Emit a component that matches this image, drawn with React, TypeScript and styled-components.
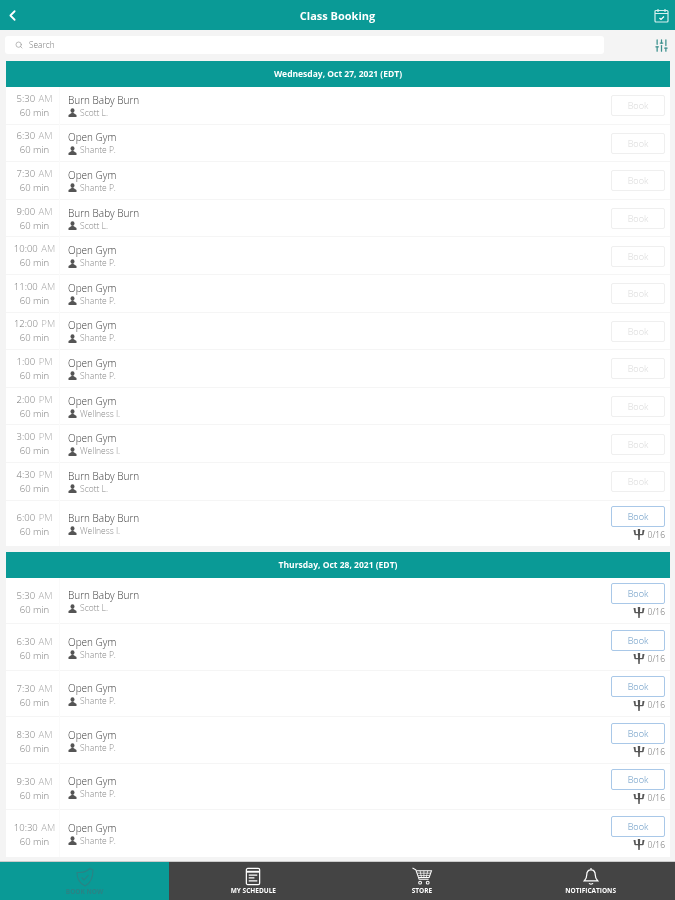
import React from 'react';
import styled, { createGlobalStyle } from 'styled-components';
import { ChevronLeft, Search as SearchIcon, SlidersVertical } from 'lucide-react';

const teal = '#0a9a96';

type ClassItem = {
  time: string;
  ampm: string;
  name: string;
  coach: string;
  open?: boolean;
};

const wednesday: ClassItem[] = [
  { time: '5:30', ampm: 'AM', name: 'Burn Baby Burn', coach: 'Scott L.' },
  { time: '6:30', ampm: 'AM', name: 'Open Gym', coach: 'Shante P.' },
  { time: '7:30', ampm: 'AM', name: 'Open Gym', coach: 'Shante P.' },
  { time: '9:00', ampm: 'AM', name: 'Burn Baby Burn', coach: 'Scott L.' },
  { time: '10:00', ampm: 'AM', name: 'Open Gym', coach: 'Shante P.' },
  { time: '11:00', ampm: 'AM', name: 'Open Gym', coach: 'Shante P.' },
  { time: '12:00', ampm: 'PM', name: 'Open Gym', coach: 'Shante P.' },
  { time: '1:00', ampm: 'PM', name: 'Open Gym', coach: 'Shante P.' },
  { time: '2:00', ampm: 'PM', name: 'Open Gym', coach: 'Wellness I.' },
  { time: '3:00', ampm: 'PM', name: 'Open Gym', coach: 'Wellness I.' },
  { time: '4:30', ampm: 'PM', name: 'Burn Baby Burn', coach: 'Scott L.' },
  { time: '6:00', ampm: 'PM', name: 'Burn Baby Burn', coach: 'Wellness I.', open: true },
];

const thursday: ClassItem[] = [
  { time: '5:30', ampm: 'AM', name: 'Burn Baby Burn', coach: 'Scott L.', open: true },
  { time: '6:30', ampm: 'AM', name: 'Open Gym', coach: 'Shante P.', open: true },
  { time: '7:30', ampm: 'AM', name: 'Open Gym', coach: 'Shante P.', open: true },
  { time: '8:30', ampm: 'AM', name: 'Open Gym', coach: 'Shante P.', open: true },
  { time: '9:30', ampm: 'AM', name: 'Open Gym', coach: 'Shante P.', open: true },
  { time: '10:30', ampm: 'AM', name: 'Open Gym', coach: 'Shante P.', open: true },
];

export default function App() {
  return (
    <>
      <GlobalStyle />
      <Page>
        <Header>
          <ChevronLeft size={17} color="#fff" strokeWidth={2.5} />
          <Title>Class Booking</Title>
          <CalendarCheck />
        </Header>
        <SearchRow>
          <SearchBox>
            <SearchIcon size={8} color="#999" />
            <span>Search</span>
          </SearchBox>
          <SlidersVertical size={15} color="#3a908d" />
        </SearchRow>
        <Content>
          <Day title="Wednesday, Oct 27, 2021 (EDT)" items={wednesday} />
          <Day title="Thursday, Oct 28, 2021 (EDT)" items={thursday} />
        </Content>
        <BottomNav>
          <NavItem $active>
            <ShieldCheck />
            <NavLabel $active>BOOK NOW</NavLabel>
          </NavItem>
          <NavItem>
            <ScheduleIcon />
            <NavLabel>MY SCHEDULE</NavLabel>
          </NavItem>
          <NavItem>
            <CartIcon />
            <NavLabel>STORE</NavLabel>
          </NavItem>
          <NavItem>
            <BellIcon />
            <NavLabel>NOTIFICATIONS</NavLabel>
          </NavItem>
        </BottomNav>
      </Page>
    </>
  );
}

function Day({ title, items }: { title: string; items: ClassItem[] }) {
  return (
    <Section>
      <DayHeader>{title}</DayHeader>
      {items.map((item, i) => (
        <Row key={i} $open={item.open} $loose={items === thursday}>
          <TimeCol $open={item.open}>
            <div>
              {item.time} <Ampm>{item.ampm}</Ampm>
            </div>
            <div>60 min</div>
          </TimeCol>
          <InfoCol $open={item.open}>
            <ClassName>{item.name}</ClassName>
            <Coach>
              <CoachIcon />
              {item.coach}
            </Coach>
          </InfoCol>
          <BookCol>
            <BookButton $open={item.open}>Book</BookButton>
            {item.open && (
              <Spots>
                <SpotsIcon />
                0/16
              </Spots>
            )}
          </BookCol>
        </Row>
      ))}
    </Section>
  );
}

function CoachIcon() {
  return (
    <svg width="9" height="9" viewBox="0 0 9 9" fill="#555">
      <ellipse cx="4.500" cy="2.600" rx="2" ry="2.400" />
      <path d="M3.500 5 L5.500 5 L8.500 7 V9 H0.500 V7Z" />
    </svg>
  );
}

function CalendarCheck() {
  return (
    <svg width="15" height="15" viewBox="0 0 15 15" fill="none" stroke="#d8f0ef" strokeWidth="1.2">
      <rect x="1" y="2.500" width="13" height="11.500" rx="1" />
      <path d="M4 1v3M11 1v3M1 5.500h13" />
      <path d="M5.500 10l1.500 1.500 3-3" stroke="#fff" />
    </svg>
  );
}

function ShieldCheck() {
  return (
    <svg width="20" height="20" viewBox="0 0 20 20" fill="none" stroke="#2b8385" strokeWidth="1.1">
      <path d="M2 5.500 Q10 6 15 1.500 L18 3 Q18 15 10 19 Q2 15 2 5.500Z" />
      <path d="M6.500 10.500l2.500 2.500 4.500-5" />
    </svg>
  );
}

function ScheduleIcon() {
  return (
    <svg width="16" height="19" viewBox="0 0 16 20" fill="none" stroke="#fff" strokeWidth="1.3">
      <rect x="1" y="1.500" width="14" height="17" rx="1.500" />
      <path d="M1 5h14" strokeWidth="2" />
      <path d="M3.500 8.500h9M3.500 11.500h6M3.500 14.500h9" />
    </svg>
  );
}

function CartIcon() {
  return (
    <svg width="22" height="19" viewBox="0 0 22 20" fill="none" stroke="#fff" strokeWidth="1.1">
      <path d="M1 1l3.500 2 3.500 10h10" />
      <path d="M5 4h16l-2.500 7H7.500" />
      <path d="M6 6.500h14M7 9h12M9 4l1.500 7M13 4v7M17 4l-1.500 7" strokeWidth="0.8" />
      <circle cx="9" cy="16.500" r="1.500" />
      <circle cx="17" cy="16.500" r="1.500" />
    </svg>
  );
}

function BellIcon() {
  return (
    <svg width="18" height="19" viewBox="0 0 18 20" fill="none" stroke="#fff" strokeWidth="1.3">
      <path d="M9 1v2M9 3c-3 0-4.500 2.500-4.500 5.500 0 3-1 4.500-2.500 6h14c-1.500-1.500-2.500-3-2.500-6C13.500 5.500 12 3 9 3Z" />
      <path d="M7 17c.5 1.300 3.500 1.300 4 0" />
    </svg>
  );
}

function SpotsIcon() {
  return (
    <svg width="12" height="11" viewBox="0 0 12 11" fill="#555">
      <path d="M0.500 1 H2.500 L3 6 H1.500Z" />
      <path d="M4.800 0 H7.200 L6.700 11 H5.300Z" />
      <path d="M9.500 1 H11.500 L10.500 6 H9Z" />
      <rect x="2" y="5" width="8" height="1.200" />
    </svg>
  );
}

const GlobalStyle = createGlobalStyle`
  html, body {
    margin: 0;
    padding: 0;
    background: #f4f4f4;
  }
  * {
    box-sizing: border-box;
  }
`;

const Page = styled.div`
  width: 675px;
  height: 900px;
  overflow: hidden;
  display: flex;
  flex-direction: column;
  background: #f4f4f4;
  font-family: 'Open Sans', sans-serif;
  filter: blur(0.45px);
`;

const Header = styled.header`
  height: 30px;
  flex: none;
  display: flex;
  align-items: center;
  justify-content: space-between;
  padding: 0 6px 0 4px;
  background: ${teal};
`;

const Title = styled.h1`
  margin: 0;
  font-size: 11px;
  font-weight: 700;
  color: #fff;
`;

const SearchRow = styled.div`
  flex: none;
  display: flex;
  align-items: center;
  justify-content: space-between;
  height: 30px;
  margin-bottom: 1px;
  padding: 0 6px 0 5px;
`;

const SearchBox = styled.div`
  width: 599px;
  height: 18px;
  display: flex;
  align-items: center;
  gap: 6px;
  padding: 0 0 1px 10px;
  background: #fff;
  border-radius: 3px;
  font-size: 8.300px;
  font-weight: 300;
  color: #777;
`;

const Content = styled.main`
  flex: 1;
  min-height: 0;
  overflow: hidden;
  display: flex;
  flex-direction: column;
  gap: 6px;
  margin: 0 5px 0 6px;
`;

const Section = styled.section`
  flex: none;
  background: #fff;
`;

const DayHeader = styled.div`
  height: 26px;
  display: flex;
  align-items: center;
  justify-content: center;
  padding-bottom: 1px;
  background: ${teal};
  color: #fff;
  font-size: 8.500px;
  font-weight: 700;
`;

const Row = styled.div<{ $open?: boolean; $loose?: boolean }>`
  display: grid;
  grid-template-columns: 54px 1fr 59px;
  align-items: center;
  height: ${(p) => (p.$loose ? '46.5px' : p.$open ? '45px' : '37.6px')};
  &:not(:last-child) {
    box-shadow: inset 0 -1px 0 #f5f5f5;
  }
`;

const TimeCol = styled.div<{ $open?: boolean }>`
  height: 100%;
  display: flex;
  flex-direction: column;
  justify-content: center;
  gap: 2px;
  align-items: center;
  padding: ${(p) => (p.$open ? '4px' : '0')} 0 0 4px;
  font-size: 9.500px;
  font-weight: 300;
  line-height: 12px;
  color: #777;
  white-space: nowrap;
  border-right: 1px solid #fafafa;
`;

const Ampm = styled.span`
  margin-left: 1px;
  color: #aaa;
`;

const InfoCol = styled.div<{ $open?: boolean }>`
  padding: ${(p) => (p.$open ? '2px' : '1px')} 0 0 8px;
`;

const ClassName = styled.div`
  font-size: 10px;
  font-weight: 300;
  line-height: 13px;
  color: #3c3c3c;
`;

const Coach = styled.div`
  display: flex;
  align-items: center;
  gap: 3px;
  font-size: 8.500px;
  font-weight: 300;
  line-height: 12px;
  color: #888;
`;

const BookCol = styled.div`
  display: flex;
  flex-direction: column;
  align-items: flex-end;
  gap: 2px;
  padding-right: 5px;
`;

const BookButton = styled.div<{ $open?: boolean }>`
  width: 54px;
  height: 21px;
  display: flex;
  align-items: center;
  justify-content: center;
  border: 1px solid ${(p) => (p.$open ? '#a9c8e8' : '#efefef')};
  border-radius: 2px;
  font-size: 9px;
  font-weight: 300;
  color: ${(p) => (p.$open ? '#5f92c0' : '#d8d8d8')};
`;

const Spots = styled.div`
  display: flex;
  align-items: center;
  gap: 3px;
  font-size: 8.500px;
  font-weight: 300;
  line-height: 12px;
  color: #666;
`;

const BottomNav = styled.nav`
  flex: none;
  height: 39px;
  display: grid;
  grid-template-columns: 169px 1fr 1fr 1fr;
  background: #444;
  border-top: 1px solid #ccc;
`;

const NavItem = styled.div<{ $active?: boolean }>`
  display: flex;
  flex-direction: column;
  align-items: center;
  justify-content: center;
  gap: 1px;
  background: ${(p) => (p.$active ? teal : 'transparent')};
`;

const NavLabel = styled.span<{ $active?: boolean }>`
  font-size: 6.500px;
  font-weight: 700;
  line-height: 8px;
  color: ${(p) => (p.$active ? '#2b8385' : '#fff')};
`;
